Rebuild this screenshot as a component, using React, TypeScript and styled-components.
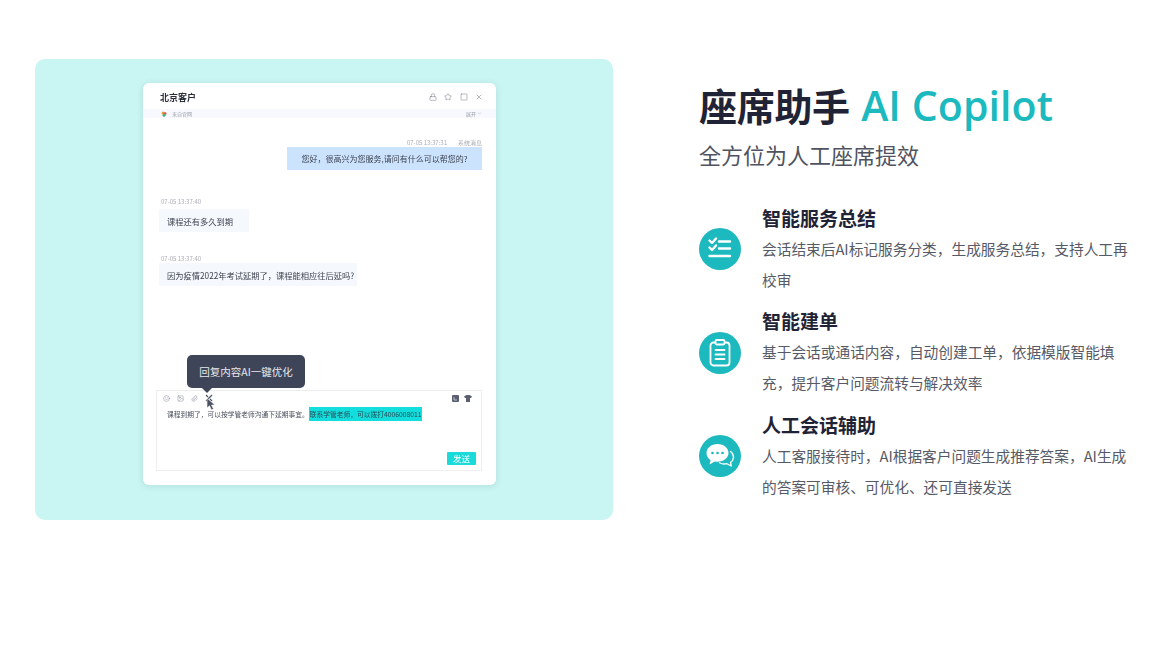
import React from "react";
import styled, { createGlobalStyle } from "styled-components";
import { Lock, Star, Square, X, Smile, Image, Paperclip, ChevronDown } from "lucide-react";

const Global = createGlobalStyle`
  html, body { margin: 0; padding: 0; background: #fff; }
  body { font-family: "Open Sans", "Noto Sans CJK SC", sans-serif; }
`;

const Page = styled.div`
  width: 1166px; height: 658px; overflow: hidden; display: flex; align-items: flex-start;
  padding: 59px 0 0 35px; box-sizing: border-box; background: #fff;
`;
const Panel = styled.div`
  width: 578px; height: 461px; flex: none; background: #c9f5f2; border-radius: 10px;
  padding: 24px 0 0 108px; box-sizing: border-box; display: flex; justify-content: flex-start;
`;
const Win = styled.div`
  position: relative; width: 353px; height: 402px; background: #fff; border-radius: 6px;
  box-shadow: 0 1px 6px rgba(60, 130, 130, .18); display: flex; flex-direction: column;
  font-family: "Noto Sans CJK SC", sans-serif; filter: blur(.3px);
`;
const WinHead = styled.div`
  height: 26px; flex: none; display: flex; align-items: center; justify-content: space-between; padding: 2px 13px 0 17px; box-sizing: border-box;
`;
const WinTitle = styled.span` font-size: 9px; font-weight: 700; color: #2b2f3a; `;
const WinIcons = styled.div` display: flex; gap: 7.5px; color: #6f7480; `;
const SubBar = styled.div`
  height: 9px; flex: none; background: #f8f9fe; display: flex; align-items: center; justify-content: space-between;
  padding: 0 14px 0 18px; font-size: 5px; color: #9a9fa9;
`;
const SubLeft = styled.span` display: flex; align-items: center; gap: 5px; `;
const SubRight = styled.span` display: flex; align-items: center; gap: 1px; `;
const Chat = styled.div` flex: 1; display: flex; flex-direction: column; padding: 21px 14px 0 16px; min-height: 0; `;
const Meta = styled.div<{ $right?: boolean; $top: number }>`
  font-size: 6px; line-height: 7px; color: #a8acb4; margin-top: ${p => p.$top}px;
  display: flex; gap: 11px; justify-content: ${p => (p.$right ? "flex-end" : "flex-start")};
  padding-left: ${p => (p.$right ? 0 : 2)}px;
`;
const Bubble = styled.div<{ $right?: boolean; $w: number; $gap: number }>`
  width: ${p => p.$w}px; height: 23px; box-sizing: border-box; margin-top: ${p => p.$gap}px; display: flex; align-items: center;
  justify-content: ${p => (p.$right ? "center" : "flex-start")}; padding-left: ${p => (p.$right ? 0 : 8)}px;
  align-self: ${p => (p.$right ? "flex-end" : "flex-start")};
  background: ${p => (p.$right ? "#cce3fd" : "#f5f8fd")}; font-size: ${p => (p.$right ? 8 : 8.25)}px; color: #3d4250; white-space: nowrap;
`;
const Editor = styled.div`
  height: 81px; flex: none; box-sizing: border-box; margin: 0 14px 14px 13px; border: 1px solid #eceef0;
  display: flex; flex-direction: column; position: relative; padding: 3px 9px 0 6px;
`;
const ToolRow = styled.div` display: flex; align-items: center; justify-content: space-between; height: 8px; `;
const ToolGroup = styled.div<{ $gap: number }>` display: flex; align-items: center; gap: ${p => p.$gap}px; color: #7d8290; `;
const EditText = styled.div`
  font-size: 6.75px; line-height: 10px; color: #4a4f5c; margin: 7px 0 0 4px; white-space: nowrap;
`;
const Mark = styled.span` background: #12dede; color: #2b4a55; padding: 2px 1px; `;
const Send = styled.div`
  position: absolute; right: 5px; bottom: 5px; width: 29px; height: 13px; background: #1bdada; border-radius: 1px;
  color: #fff; font-size: 8.5px; line-height: 13px; text-align: center;
`;
const Tip = styled.div`
  position: absolute; left: 44px; top: 272px; width: 118px; height: 33px; background: #3f4558; border-radius: 5px;
  color: #e6e8ee; font-size: 10.5px; line-height: 33px; text-align: center;
  &::after { content: ""; position: absolute; left: 14px; bottom: -5px; border: 6px solid transparent; border-bottom: 0; border-top-color: #3f4558; }
`;
const Pointer = styled.svg` position: absolute; left: 63px; top: 314px; `;

const Side = styled.div` width: 435px; margin-left: 86px; flex: none; padding-top: 16px; `;
const H1 = styled.h1`
  margin: 0; font-size: 38px; line-height: 60px; font-weight: 700; color: #1f2335; white-space: nowrap;
  font-family: "Noto Sans CJK SC", sans-serif; letter-spacing: -.3px;
`;
const Accent = styled.span` color: #1cb9bf; font-family: "Open Sans", sans-serif; font-weight: 600; letter-spacing: .1px; font-size: 41px; margin-left: 3px; `;
const Sub = styled.div`
  font-family: "Noto Sans CJK SC", sans-serif; font-size: 22px; line-height: 32px; color: #50535f; margin-top: 3px;
`;
const List = styled.div` margin-top: 31px; display: flex; flex-direction: column; gap: 7px; `;
const Item = styled.div` display: flex; align-items: center; height: 96.5px; `;
const IconDisc = styled.div`
  width: 42px; height: 42px; border-radius: 50%; background: #1cb9bf; flex: none; display: flex; align-items: center; justify-content: center;
  margin-right: 21px;
`;
const ItemBody = styled.div` font-family: "Noto Sans CJK SC", sans-serif; min-width: 0; `;
const ItemTitle = styled.div` font-size: 19px; line-height: 28px; font-weight: 700; color: #1f2335; `;
const ItemText = styled.div` font-size: 14.7px; line-height: 31px; color: #565a66; width: 372px; margin-top: 1px; `;

const ChecklistIcon = () => (
  <svg width="26" height="26" viewBox="0 0 26 26" fill="none" stroke="#fff" strokeLinecap="round" strokeLinejoin="round">
    <path d="M2.5 4.5 5 7l4-4.5" strokeWidth="2.4" />
    <path d="M2.5 11.5 5 14l4-4.5" strokeWidth="2.4" />
    <path d="M12 5.5h11M12 12.5h11M2.5 20h20.5" strokeWidth="2.4" />
  </svg>
);
const ClipboardIcon = () => (
  <svg width="24" height="28" viewBox="0 0 24 28" fill="none" stroke="#fff" strokeLinecap="round" strokeLinejoin="round">
    <rect x="2.5" y="3.5" width="19" height="23" rx="3" strokeWidth="1.8" />
    <rect x="7.5" y="1" width="9" height="4.5" rx="1.2" fill="#1cb9bf" strokeWidth="1.8" />
    <path d="M7.5 11h9M7.5 15.5h9M7.5 20h9" strokeWidth="1.8" />
  </svg>
);
const ChatIcon = () => (
  <svg width="30" height="28" viewBox="0 0 30 28" fill="none">
    <path d="M12.5 2C6 2 1.5 6 1.5 11c0 3 1.6 5.600 4.100 7.200L4.500 22.500l5.200-3.100c.9.2 1.900.3 2.800.3 6.500 0 11-4 11-8.700C23.500 6 19 2 12.500 2Z" fill="#fff" />
    <circle cx="7.500" cy="11" r="1.300" fill="#1cb9bf" /><circle cx="12.500" cy="11" r="1.300" fill="#1cb9bf" /><circle cx="17.500" cy="11" r="1.300" fill="#1cb9bf" />
    <path d="M25.500 9.500c2 1.500 3 3.500 3 5.500 0 2.300-1.200 4.200-3 5.500l.8 3.500-4.300-2.300c-2.600.6-5.500.2-7.500-1" stroke="#fff" strokeWidth="1.300" strokeLinejoin="round" strokeLinecap="round" />
  </svg>
);
const WandIcon = () => (
  <svg width="8" height="8" viewBox="0 0 8 8" fill="none" stroke="#4b5160" strokeWidth="1.200">
    <path d="M1 7 7 1M1 1l2 2M5 5l2 2" />
  </svg>
);
const BadgeIcon = () => (
  <svg width="7" height="7" viewBox="0 0 7 7"><rect width="7" height="7" rx="1" fill="#5a6072" /><path d="M2 2v3h3" stroke="#cfd3dc" strokeWidth=".8" fill="none" /></svg>
);
const ShirtIcon = () => (
  <svg width="8" height="7" viewBox="0 0 8 7"><path d="M0 1.500 2.500 0h3L8 1.500 7 3H6v4H2V3H1Z" fill="#5a6072" /></svg>
);
const LogoDot = () => (
  <svg width="6" height="6" viewBox="0 0 6 6"><circle cx="2" cy="2" r="1.500" fill="#e9a23b" /><circle cx="4" cy="2.500" r="1.500" fill="#d9604a" /><circle cx="3" cy="4.300" r="1.500" fill="#4bb07a" /></svg>
);

const items = [
  { t: "智能服务总结", d: "会话结束后AI标记服务分类，生成服务总结，支持人工再校审", i: <ChecklistIcon /> },
  { t: "智能建单", d: "基于会话或通话内容，自动创建工单，依据模版智能填充，提升客户问题流转与解决效率", i: <ClipboardIcon /> },
  { t: "人工会话辅助", d: "人工客服接待时，AI根据客户问题生成推荐答案，AI生成的答案可审核、可优化、还可直接发送", i: <ChatIcon /> },
];

export default function App() {
  return (
    <Page>
      <Global />
      <Panel>
        <Win>
          <WinHead>
            <WinTitle>北京客户</WinTitle>
            <WinIcons>
              <Lock size={8} strokeWidth={1.5} />
              <Star size={8} strokeWidth={1.5} />
              <Square size={8} strokeWidth={1.5} />
              <X size={8} strokeWidth={1.5} />
            </WinIcons>
          </WinHead>
          <SubBar>
            <SubLeft><LogoDot />来自官网</SubLeft>
            <SubRight>展开<ChevronDown size={5} /></SubRight>
          </SubBar>
          <Chat>
            <Meta $right $top={0}><span>07-05 13:37:31</span><span>系统消息</span></Meta>
            <Bubble $right $w={195} $gap={1}>您好，很高兴为您服务,请问有什么可以帮您的?</Bubble>
            <Meta $top={28}>07-05 13:37:40</Meta>
            <Bubble $w={90} $gap={4}>课程还有多久到期</Bubble>
            <Meta $top={23}>07-05 13:37:40</Meta>
            <Bubble $w={198} $gap={1}>因为疫情2022年考试延期了，课程能相应往后延吗?</Bubble>
          </Chat>
          <Editor>
            <ToolRow>
              <ToolGroup $gap={7}>
                <Smile size={7} strokeWidth={1.5} />
                <Image size={7} strokeWidth={1.5} />
                <Paperclip size={7} strokeWidth={1.5} />
                <WandIcon />
              </ToolGroup>
              <ToolGroup $gap={5}>
                <BadgeIcon />
                <ShirtIcon />
              </ToolGroup>
            </ToolRow>
            <EditText>课程到期了，可以按学管老师沟通下延期事宜。<Mark>联系学管老师，可以拨打4006008011</Mark></EditText>
            <Send>发送</Send>
          </Editor>
          <Tip>回复内容AI一键优化</Tip>
          <Pointer width="11" height="14" viewBox="0 0 11 14">
            <path d="M1 1v10l2.500-2.200L5.500 13l2-1-2-4H9Z" fill="#4b5160" stroke="#fff" strokeWidth=".6" />
          </Pointer>
        </Win>
      </Panel>
      <Side>
        <H1>座席助手 <Accent>AI Copilot</Accent></H1>
        <Sub>全方位为人工座席提效</Sub>
        <List>
          {items.map(it => (
            <Item key={it.t}>
              <IconDisc>{it.i}</IconDisc>
              <ItemBody>
                <ItemTitle>{it.t}</ItemTitle>
                <ItemText>{it.d}</ItemText>
              </ItemBody>
            </Item>
          ))}
        </List>
      </Side>
    </Page>
  );
}
